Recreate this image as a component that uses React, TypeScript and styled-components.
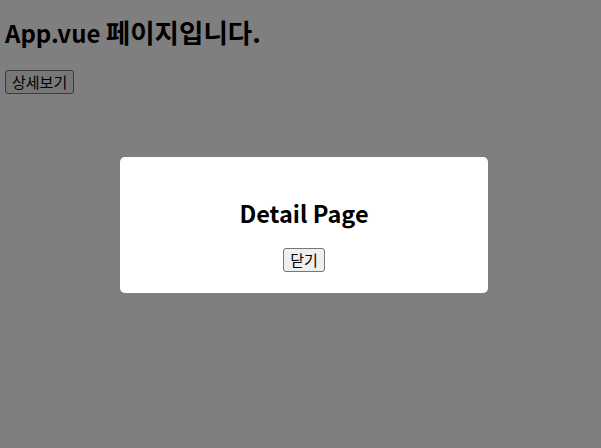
import React from "react";
import styled, { createGlobalStyle } from "styled-components";

const GlobalStyle = createGlobalStyle`
  html, body {
    margin: 0;
    padding: 0;
    background: #ffffff;
  }
  body {
    font-family: "Noto Sans CJK KR", "Noto Sans", sans-serif;
    color: #000000;
  }
`;

const Page = styled.div`
  padding: 0 0 0 5px;
`;

const Title = styled.h2`
  margin: 15.5px 0 20px;
  font-size: 24px;
  line-height: 32px;
  font-weight: 700;
`;

const Hangul = styled.span`
  font-size: 26.5px;
  line-height: 32px;
`;

const Button = styled.button`
  font-family: "Noto Sans CJK KR", "Noto Sans", sans-serif;
  font-size: 15px;
  line-height: 20px;
  color: #000000;
  background: #efefef;
  border: 1px solid #767676;
  border-radius: 3px;
  padding: 1px 6px;
  margin: 0;
  cursor: pointer;
`;

const Overlay = styled.div`
  position: fixed;
  inset: 0;
  background: rgba(0, 0, 0, 0.5);
  display: flex;
  align-items: center;
  justify-content: center;
  padding: 2px 0 0 7px;
  box-sizing: border-box;
`;

const Modal = styled.div`
  width: 368px;
  height: 136px;
  box-sizing: border-box;
  background: #ffffff;
  border-radius: 5px;
  padding: 40px 20px 0;
  display: flex;
  flex-direction: column;
  align-items: center;
`;

const ModalTitle = styled.h2`
  margin: 0 0 19px;
  font-size: 23.5px;
  line-height: 32px;
  font-weight: 700;
`;

export default function App() {
  return (
    <>
      <GlobalStyle />
      <Page>
        <Title>
          App.vue <Hangul>페이지입니다.</Hangul>
        </Title>
        <Button>상세보기</Button>
      </Page>
      <Overlay>
        <Modal>
          <ModalTitle>Detail Page</ModalTitle>
          <Button>닫기</Button>
        </Modal>
      </Overlay>
    </>
  );
}
